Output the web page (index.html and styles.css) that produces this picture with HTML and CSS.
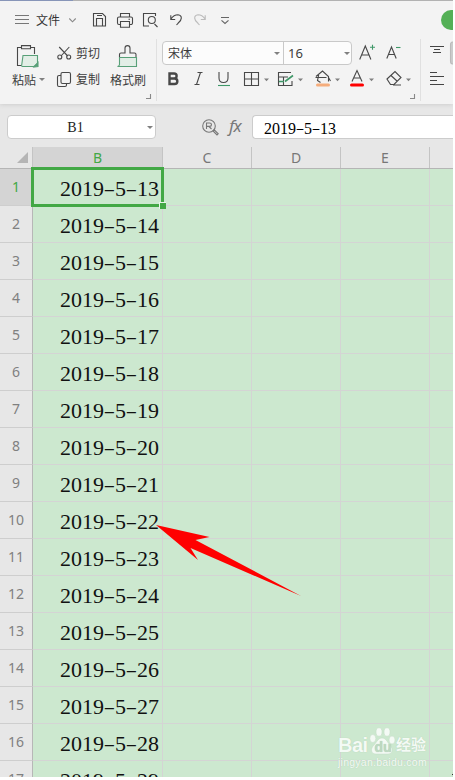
FILE: index.html
```
<!DOCTYPE html>
<html lang="zh-CN">
<head>
<meta charset="utf-8">
<title>B1</title>
<link rel="stylesheet" href="styles.css">
</head>
<body>
<div class="app">
  <header class="ribbon">
    <nav class="quick">
      <svg class="i-menu" width="14" height="10"><path d="M0 .5h14M0 4.500h14M0 8.500h14"/></svg>
      <span class="file">文件</span>
      <svg class="i-chev" width="7" height="5"><path d="M.3.5l3.200 3.300L6.700.5"/></svg>
      <svg class="i-save" width="13" height="14"><path d="M.5.5h9l3 3v9.500h-12zM3.500 13V5.500h6V13M4 2.500h5"/></svg>
      <svg class="i-print" width="16" height="15"><path d="M3.500 4V.5h9V4M3.500 11.500H2a1.500 1.500 0 0 1-1.500-1.500V5.500A1.500 1.500 0 0 1 2 4h12a1.500 1.500 0 0 1 1.500 1.500V10a1.500 1.500 0 0 1-1.500 1.500h-1.500M3.500 8.500h9v5.800h-9zM11.500 6.200h1.500"/></svg>
      <svg class="i-preview" width="16" height="15"><path d="M12.500 3V.5H.5v12.500H6M11.500 11l3 3"/><circle cx="8.800" cy="7" r="3.500"/></svg>
      <svg class="i-undo" width="12" height="12"><path d="M.8 1.200v4.300h4.400M1 5C3 2 5.500.8 8 .8c4.600.6 4.200 5.400 0 8.500L6.500 11"/></svg>
      <svg class="i-redo pale" width="12" height="12"><path d="M11.200 1.200v4.300H6.800M11 5C9 2 6.500.8 4 .8c-4.600.6-4.200 5.400 0 8.500L5.500 11"/></svg>
      <svg class="i-more" width="8" height="8"><path d="M0 .5h8M.5 3.300L4 6.500l3.500-3.200"/></svg>
      <i class="badge"></i>
    </nav>
    <div class="tools">
      <section class="clip">
        <div class="big paste">
          <svg width="24" height="24"><path d="M5 2.500H1.500v18H6M15 2.500h3.500V9M5.500.6h9v3.200h-9z"/><path class="mint" d="M7 10.500h14.500v8l-3.500 3H6.500c-1 0-1-1-.8-1.500z"/><path class="fillg" d="M22 17.500v4l-4 .5z"/></svg>
          <span>粘贴<b class="tri"></b></span>
        </div>
        <div class="pair">
          <div><svg width="15" height="14"><path d="M2.200 1l8.500 9M12.300 1L4 10"/><circle cx="2.800" cy="11" r="2"/><circle cx="11.700" cy="11" r="2"/></svg><span>剪切</span></div>
          <div><svg width="15" height="15"><path d="M4 3.500H2A1.500 1.500 0 0 0 .5 5v8A1.500 1.500 0 0 0 2 14.500h6A1.500 1.500 0 0 0 9.500 13v-2"/><rect x="4" y=".5" width="9.500" height="11" rx="1.500"/></svg><span>复制</span></div>
        </div>
        <div class="big brush">
          <svg width="22" height="24"><path d="M2.500 12.500V9.500q0-1.500 1.500-1.500H8V3q0-2.400 2.500-2.400T13 3v5h4.500Q19 8 19 9.500v3"/><path class="mint" d="M2.500 12.500h17v9H.5q2-.5 2-2z"/></svg>
          <span>格式刷</span>
        </div>
        <svg class="corner" width="5" height="5"><path d="M4.500 0v4.500H0"/></svg>
      </section>
      <section class="font">
        <div class="line1">
          <div class="combo"><span class="fam">宋体</span><b class="tri"></b><span class="size">16</span><b class="tri t2"></b></div>
          <svg class="i-big" width="17" height="17"><path d="M.7 15.500L6.300 2l5.600 13.500M2.600 11h7.400"/><path class="green" d="M13.500.8v5M11 3.300h5"/></svg>
          <svg class="i-small" width="15" height="17"><path d="M.8 14.500L5.500 3l4.700 11.500M2.500 10.500h6"/><path class="green" d="M10 3.500h4.500"/></svg>
        </div>
        <div class="line2">
          <svg width="260" height="20">
            <path class="bold" d="M7.500 4.500h4.500c3.500 0 3.500 5 0 5H7.500zM7.500 9.500h5c3.800 0 3.800 5.500 0 5.500h-5z"/>
            <path d="M35.500 3.500h5M32.500 15.500h5M38.500 3.500l-4 12M57 3v6c0 6 9 6 9 0V3"/>
            <path class="green" d="M56 16.500h12"/>
            <path d="M82.500 3.500h14v13h-14zM89.500 4v12M83 10h13"/>
            <path d="M129 3.500h-12.500v13H130V12M117 8h9M117 12.500h5M121.500 8v8"/><path class="green thick" d="M123 12.500l8-6M117 12.500h5"/>
            <path d="M154 7.500L160.500 2l6 5.500v5M153.500 8.500h11M157 4.500l-1.500 7 3 2M166.500 8.500l2 3.500"/><rect x="154" y="14.500" width="14" height="3" rx="1.500" class="peach"/>
            <path d="M190 12.500L195 1.500l5 11M192 9h6"/><rect x="188" y="14.500" width="14" height="3" rx="1.500" class="red"/>
            <path d="M225 10l8-7.500 6 6-7 7h-3.500zM229 6.500l6.500 6M231 16h8"/>
            <path class="tris" d="M102 9.500h5l-2.500 2.800zM136 9.500h5l-2.500 2.800zM173 9.500h5l-2.500 2.800zM207 9.500h5l-2.500 2.800zM244 9.500h5l-2.500 2.800z"/>
          </svg>
        </div>
        <svg class="corner" width="5" height="5"><path d="M4.500 0v4.500H0"/></svg>
      </section>
      <section class="align">
        <svg width="30" height="60"><path class="al" d="M9 7.500h14M13 10.500h6M12 13.500h8M9 33.500h7M9 37.500h14M9 41.500h7M9 45.500h14"/><rect class="tab" x="29.500" y="3" width="4" height="22" rx="3"/></svg>
      </section>
    </div>
  </header>
  <div class="formula">
    <div class="name"><span>B1</span><b class="tri"></b></div>
    <svg class="i-look" width="17" height="17"><circle cx="7" cy="7" r="6.300"/><path d="M4.500 10V4h3q2 0 2 1.700t-2 1.700h-3M7 7.500l2.500 2.500M11 12l1.200-1.200 4 4L15 16z"/></svg>
    <span class="fx">fx</span>
    <div class="value">2019-5-13</div>
  </div>
  <main class="sheet" id="sheet">
    <div class="head">
      <div class="cornercell"><i></i></div>
      <div class="on">B</div><div>C</div><div>D</div><div>E</div><div></div>
    </div>
  </main>
  <svg class="arrow" width="146" height="72"><path d="M0 0L53.500 12 39.500 15 145 71 34.500 23 42 35z"/></svg>
  <div class="mark">
    <div class="logo"><span class="bai">Bai</span><svg width="27" height="28"><ellipse cx="3.800" cy="11.500" rx="3" ry="4"/><ellipse cx="10" cy="5" rx="3" ry="4.200"/><ellipse cx="18" cy="5" rx="3" ry="4.200"/><ellipse cx="23" cy="13" rx="3" ry="4"/><path d="M13 11c4 0 5 4 8 7 4 5 2 9-2 9H7c-5 0-6-5-2-9 3-3 4-7 8-7z"/><text x="5.500" y="25">du</text></svg><span class="jy">经验</span></div>
    <div class="url">jingyan.baidu.com</div>
  </div>
  <svg class="cross" width="3" height="5"><path d="M1.500 0v5M0 2.500h3"/></svg>
</div>
<script src="rows.js"></script>
</body>
</html>
```
FILE: styles.css
```
* { box-sizing: border-box; }
body { margin: 0; background: #fff; font-family: "Noto Sans CJK SC", sans-serif; overflow: hidden; }
svg { display: block; flex: none; fill: none; stroke: #484848; stroke-width: 1.1; overflow: visible; }
.app { position: relative; width: 453px; height: 777px; overflow: hidden; background: #e7e7e7; }

.ribbon { height: 104px; background: #f3f3f3; border-top: 1px solid #b2b2b2; border-bottom: 1px solid #d8d8d8; border-image: linear-gradient(90deg, #8795b8 0 73px, #b2b2b2 73px) 1 0 0 0; box-shadow: 0 1px 4px #cfcfcf; }
.quick { display: flex; align-items: center; height: 38px; padding-left: 15px; }
.file { margin-left: 7px; width: 25px; font-size: 12px; line-height: 18px; color: #333; white-space: nowrap; }
.i-menu { stroke: #777; }
.i-chev { margin-left: 8px; stroke: #888; }
.i-save { margin-left: 17px; }
.i-print { margin-left: 11px; }
.i-preview { margin-left: 10px; }
.i-undo { margin-left: 11px; }
.i-redo { margin-left: 12px; }
.i-more { margin-left: 15px; margin-top: 1px; stroke: #666; }
.pale { stroke: #bbb; }
.badge { width: 30px; height: 20px; margin-left: auto; margin-right: -18px; flex: none; border-radius: 10px; background: #54b056; }
.tools { display: flex; height: 62px; }
.tools section { position: relative; flex: none; }
.tools span { font-size: 12px; line-height: 18px; color: #3c3c3c; white-space: nowrap; }
.tri { display: inline-block; flex: none; border: 3px solid transparent; border-top: 3px solid #808080; border-bottom: 0; }
.clip { display: flex; width: 157px; border-right: 1px solid #e0e0e0; }
.big { display: flex; flex-direction: column; padding-top: 6px; }
.big span { margin-top: 2px; }
.paste { width: 45px; padding-left: 12px; }
.paste svg { margin-left: 4px; }
.paste .tri { margin-left: 3px; vertical-align: 4px; }
.pair { width: 65px; padding: 1px 0 0 12px; }
.pair div { display: flex; align-items: center; height: 26px; gap: 4px; }
.brush { width: 38px; }
.brush svg { margin-left: 7px; }
.mint { fill: #e2eee6; stroke: #58a078; }
.fillg { fill: #58a078; stroke: #58a078; }
.green { stroke: #3f9868; }
.thick { stroke-width: 1.600; }
.bold { stroke-width: 2.400; }
.peach { fill: #f5ad7c; stroke: none; }
.red { fill: #f00; stroke: none; }
.tris { fill: #808080; stroke: none; }
.corner { position: absolute; right: 5px; bottom: 2px; stroke: #888; }
.font { width: 264px; padding: 2px 0 0 5px; border-right: 1px solid #e0e0e0; }
.line1 { display: flex; }
.combo { display: flex; align-items: center; width: 190px; height: 24px; border: 1px solid #c9c9c9; border-radius: 4px; background: #fcfcfc; }
.tools .fam { width: 111px; padding-left: 5px; }
.tools .size { width: 61px; height: 22px; margin-left: 3px; padding-left: 4px; border-left: 1px solid #c9c9c9; font: 13px/23px "Noto Sans", sans-serif; }
.i-big { margin: 3px 0 0 7px; }
.i-small { margin: 3px 0 0 10px; }
.line2 { margin-top: 4px; }
.al { stroke: #444; stroke-width: 1; }
.tab { fill: #ccc; stroke: #bbb; }

.formula { display: flex; height: 43px; padding: 11px 0 0 7px; }
.name { display: flex; align-items: center; width: 149px; height: 24px; border: 1px solid #ccc; border-radius: 4px; background: #fff; font: 14px/22px "Liberation Serif", serif; color: #222; }
.name span { width: 139px; padding-top: 2px; text-align: center; padding-right: 4px; }
.i-look { margin: 4px 0 0 46px; stroke: #777; }
.fx { width: 33px; padding-left: 10px; font: italic 17px/22px "Noto Sans", sans-serif; letter-spacing: -1px; color: #777; }
.value { flex: 1; height: 24px; padding-left: 11px; border: 1px solid #ccc; border-right: 0; border-radius: 4px 0 0 4px; background: #fff; color: #000; font: 16px/25px "Liberation Serif", serif; white-space: nowrap; }
.value u, .date u { display: inline-block; width: .5em; text-align: center; text-decoration: none; transform: scale(1.600, .8); }

.head, .row { display: grid; grid-template-columns: 33px 130px 89px 89px 89px 89px; grid-template-rows: 100%; }
.head { height: 22px; border-bottom: 1px solid #b5b5b5; font: 14px/21px "Noto Sans", sans-serif; color: #777; text-align: center; }
.head div { border-right: 1px solid #c4c4c4; }
.head .on { background: #d4d4d4; color: #42a845; }
.cornercell i { display: block; margin: 5px 0 0 17px; width: 11px; height: 11px; background: #b5b5b5; clip-path: polygon(100% 0, 100% 100%, 0 100%); }
.row { height: 37px; background: #cce8cf; }
.row div { border-right: 1px solid #d4d4d4; border-bottom: 1px solid #d4d4d4; }
.row .num { background: #e7e7e7; border-color: #b7b7b7; border-bottom-color: #cecece; font: 14px/35px "Noto Sans", sans-serif; color: #808080; text-align: center; }
.row:nth-child(2) .num { background: #d4d4d4; color: #42a845; }
.row .date { position: relative; font: 22px/40px "Liberation Serif", serif; color: #111; text-align: right; padding-right: 3px; white-space: nowrap; }
.pick::before { content: ""; position: absolute; inset: -2px -2px -2px -2px; border: 3px solid #42a845; }
.pick::after { content: ""; position: absolute; z-index: 1; right: -4px; bottom: -4px; width: 6px; height: 6px; background: #42a845; border: solid #e9f5ea; border-width: 1px 0 0 1px; }

.arrow { position: absolute; left: 156px; top: 525px; fill: #f00; stroke: none; }
.mark { position: absolute; left: 338px; top: 727px; color: #f4faf5; font-family: "Liberation Sans", sans-serif; text-shadow: 0 0 1px #aac8ae; }
.logo { display: flex; align-items: flex-end; height: 28px; }
.bai { width: 31px; font: bold 20px/19px "Liberation Sans", sans-serif; letter-spacing: -.5px; }
.logo svg { fill: #f4faf5; stroke: #c2dbc5; stroke-width: .5; }
.logo text { font: bold 14px "Liberation Sans", sans-serif; fill: #bdd9c1; stroke: none; }
.jy { font: bold 15px/23px "Noto Sans CJK SC", sans-serif; white-space: nowrap; }
.url { font: 10.500px/14px "Liberation Sans", sans-serif; letter-spacing: .25px; }
.cross { position: absolute; left: 452px; top: 772px; stroke: #333; }
```
FILE: rows.js
```
const sheet = document.getElementById("sheet");
const spread = text => text.replace(/-/g, "<u>-</u>");
for (let n = 1; n <= 17; n++) {
  const row = document.createElement("div");
  row.className = "row";
  row.innerHTML = `<div class="num">${n}</div><div class="date${n === 1 ? " pick" : ""}">${spread("2019-5-" + (n + 12))}</div><div></div><div></div><div></div><div></div>`;
  sheet.append(row);
}
const value = document.querySelector(".value");
value.innerHTML = spread(value.textContent);
```
